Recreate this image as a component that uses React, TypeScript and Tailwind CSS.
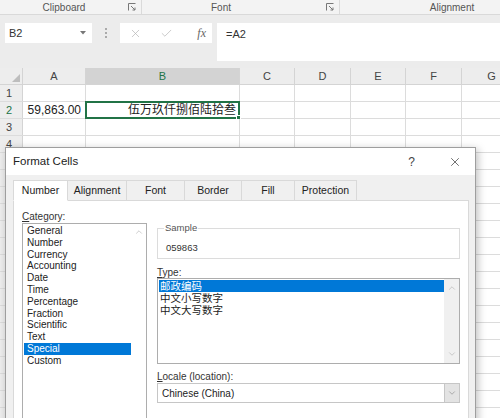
import { X, Check, ChevronDown, ChevronUp } from 'lucide-react';

const font = { fontFamily: '"Liberation Sans", "Noto Sans CJK SC", sans-serif' };

const columns = [
  { name: 'A', width: 'w-[63px]' },
  { name: 'B', width: 'w-[154px]' },
  { name: 'C', width: 'w-[55px]' },
  { name: 'D', width: 'w-[56px]' },
  { name: 'E', width: 'w-[55px]' },
  { name: 'F', width: 'w-[56px]' },
  { name: 'G', width: 'w-[60px]' },
];

const categories = [
  'General',
  'Number',
  'Currency',
  'Accounting',
  'Date',
  'Time',
  'Percentage',
  'Fraction',
  'Scientific',
  'Text',
  'Special',
  'Custom',
];

const types = ['邮政编码', '中文小写数字', '中文大写数字'];

const tabs = [
  { label: 'Number', width: 'w-[55px]' },
  { label: 'Alignment', width: 'w-[59px]' },
  { label: 'Font', width: 'w-[58px]' },
  { label: 'Border', width: 'w-[57px]' },
  { label: 'Fill', width: 'w-[53px]' },
  { label: 'Protection', width: 'w-[62px]' },
];

function Launcher() {
  return (
    <svg width="8" height="8" viewBox="0 0 8 8" className="shrink-0">
      <path d="M0.5 7.5V0.5H7.5" fill="none" stroke="#777" strokeWidth="1" />
      <path d="M3 3L7 7M7 4.5V7H4.5" fill="none" stroke="#777" strokeWidth="1" />
    </svg>
  );
}

function Ribbon() {
  return (
    <div className="flex h-[15px] bg-[#f3f3f3] border-b border-[#d9d9d9] text-[10px] text-[#555]">
      <div className="w-[142px] flex items-center pr-[5px] border-r border-[#dadada]">
        <span className="flex-1 text-center">Clipboard</span>
        <Launcher />
      </div>
      <div className="w-[198px] flex items-center pr-[5px] border-r border-[#dadada]">
        <span className="flex-1 text-center pr-[26px]">Font</span>
        <Launcher />
      </div>
      <div className="flex-1 flex items-center justify-center pl-[64px]">Alignment</div>
    </div>
  );
}

function FormulaBar() {
  return (
    <div className="flex items-start h-[53px] bg-[#ececec] pt-[8px] pl-[5px]">
      <div className="w-[87px] h-[20px] bg-white flex items-center pl-[4px] pr-[6px] text-[11px] text-[#333]">
        <span className="flex-1">B2</span>
        <svg width="6" height="4" viewBox="0 0 6 4">
          <path d="M0 0H6L3 3.5Z" fill="#777" />
        </svg>
      </div>
      <div className="w-[28px] h-[20px] flex flex-col items-center justify-center gap-[2px]">
        <span className="w-[2px] h-[2px] bg-[#aaa]" />
        <span className="w-[2px] h-[2px] bg-[#aaa]" />
        <span className="w-[2px] h-[2px] bg-[#aaa]" />
      </div>
      <div className="w-[92px] h-[20px] bg-white flex items-center pl-[9px] pr-[6px] text-[#b5b5b5]">
        <X size={13} strokeWidth={1.3} />
        <Check size={13} strokeWidth={1.3} className="ml-[18px]" />
        <span className="ml-auto text-[12px] italic text-[#666]" style={{ fontFamily: '"Liberation Serif", serif' }}>
          fx
        </span>
      </div>
      <div className="ml-[5px] flex-1 h-[38px] bg-white pl-[9px] pt-[3px] text-[11px] text-[#333]">=A2</div>
    </div>
  );
}

function Sheet() {
  const rows = Array.from({ length: 20 }, (_, i) => i + 1);
  return (
    <div>
      <div className="flex h-[17px] bg-[#ededed] border-b border-[#d4d4d4] text-[11px] text-[#444]">
        <div className="w-[23px] shrink-0 border-r border-[#d4d4d4] relative">
          <svg width="8" height="8" viewBox="0 0 8 8" className="absolute right-[2px] bottom-[2px]">
            <path d="M8 0V8H0Z" fill="#bdbdbd" />
          </svg>
        </div>
        {columns.map((c) => (
          <div
            key={c.name}
            className={`${c.width} shrink-0 flex items-center justify-center border-r border-[#d4d4d4] ${
              c.name === 'B' ? 'bg-[#d3d3d3] text-[#217346]' : ''
            }`}
          >
            {c.name}
          </div>
        ))}
      </div>
      {rows.map((r) => (
        <div key={r} className="flex h-[17px] border-b border-[#dcdcdc] text-[12px]">
          <div
            className={`w-[23px] shrink-0 bg-[#ededed] border-r border-[#d4d4d4] flex items-center pl-[6px] text-[11px] ${
              r === 2 ? 'text-[#217346] bg-[#d9d9d9]' : 'text-[#444]'
            }`}
          >
            {/* rows below 4 sit behind the dialog */}
            {r <= 4 ? r : ''}
          </div>
          {columns.map((c) => (
            <div key={c.name} className={`${c.width} shrink-0 border-r border-[#dcdcdc] relative`}>
              {r === 2 && c.name === 'A' && (
                <div className="h-full flex items-center justify-end pr-[4px] text-[#222]">59,863.00</div>
              )}
              {r === 2 && c.name === 'B' && (
                <div className="absolute -left-[1px] -top-[1px] -right-[1px] -bottom-[1px] border-2 border-[#217346] flex items-center justify-end pr-[2px] text-[#222]">
                  伍万玖仟捌佰陆拾叁
                  <span className="absolute -right-[3px] -bottom-[3px] w-[5px] h-[5px] bg-[#217346] border border-white" />
                </div>
              )}
            </div>
          ))}
        </div>
      ))}
    </div>
  );
}

function Dialog() {
  return (
    <div className="absolute left-[5px] top-[147px] w-[471px] h-[290px] bg-[#f0f0f0] border border-[#9e9e9e] shadow-[2px_2px_8px_rgba(0,0,0,0.25)]">
      <div className="h-[27px] bg-white flex items-center pl-[7px] text-[11.5px] text-[#222]">
        <span>Format Cells</span>
        <span className="ml-auto text-[12px] text-[#444]">?</span>
        <X size={14} strokeWidth={1.2} className="ml-[33px] mr-[13px] text-[#333]" />
      </div>
      <div className="px-[7px] pt-[5px]">
        <div className="flex h-[21px] text-[10.5px] text-[#222]">
          {tabs.map((t, i) => (
            <div
              key={t.label}
              className={`${t.width} flex items-center justify-center border border-[#d9d9d9] ${
                i === 0 ? 'bg-white border-b-white relative z-10' : 'border-l-0 bg-[#f0f0f0]'
              }`}
            >
              {t.label}
            </div>
          ))}
        </div>
        <div className="-mt-px w-[456px] h-[240px] bg-white border border-[#d9d9d9] flex pl-[8px] text-[10px] text-[#222]">
          <div className="w-[125px] shrink-0 pt-[8px]">
            <div className="h-[14px] text-[#333]">
              <span className="underline">C</span>ategory:
            </div>
            <div className="h-[220px] border border-[#adadad] flex">
              <div className="flex-1 pt-[1px] pl-[1px]">
                {categories.map((c) => (
                  <div
                    key={c}
                    className={`h-[11.8px] leading-[11.8px] pl-[3px] ${
                      c === 'Special' ? 'bg-[#0078d7] text-white' : ''
                    }`}
                  >
                    {c}
                  </div>
                ))}
              </div>
              <div className="w-[15px] flex justify-center pt-[3px] text-[#b0b0b0]">
                <ChevronUp size={10} strokeWidth={1.5} />
              </div>
            </div>
          </div>
          <div className="w-[303px] ml-[10px] pt-[20px]">
            <fieldset className="h-[38px] border border-[#dcdcdc] px-[8px]">
              <legend className="ml-[-2px] px-[1px] text-[9.5px] text-[#555]">Sample</legend>
              <div className="pt-[6px] text-[9.5px] text-[#333]">059863</div>
            </fieldset>
            <div className="mt-[6px] h-[13px] text-[#333]">
              <span className="underline">T</span>ype:
            </div>
            <div className="h-[86px] border border-[#adadad] flex">
              <div className="flex-1 pt-[1px] pl-[1px] text-[10.5px]">
                {types.map((t, i) => (
                  <div
                    key={t}
                    className={`h-[12px] leading-[12px] pl-[1px] ${i === 0 ? 'bg-[#0078d7] text-white' : ''}`}
                  >
                    {t}
                  </div>
                ))}
              </div>
              <div className="w-[15px] bg-[#f0f0f0] flex flex-col items-center justify-between py-[4px] text-[#b0b0b0]">
                <ChevronUp size={10} strokeWidth={1.5} />
                <ChevronDown size={10} strokeWidth={1.5} />
              </div>
            </div>
            <div className="mt-[5px] h-[12px] text-[#333]">
              <span className="underline">L</span>ocale (location):
            </div>
            <div className="mt-[2px] h-[20px] border border-[#c6c6c6] flex items-center">
              <span className="flex-1 pl-[4px]">Chinese (China)</span>
              <div className="w-[15px] h-full bg-[#e3e3e3] border-l border-[#c6c6c6] flex items-center justify-center text-[#888]">
                <ChevronDown size={10} strokeWidth={1.5} />
              </div>
            </div>
          </div>
        </div>
      </div>
    </div>
  );
}

export default function App() {
  return (
    <div className="relative w-[500px] h-[418px] overflow-hidden bg-white" style={font}>
      <Ribbon />
      <FormulaBar />
      <Sheet />
      <Dialog />
    </div>
  );
}
